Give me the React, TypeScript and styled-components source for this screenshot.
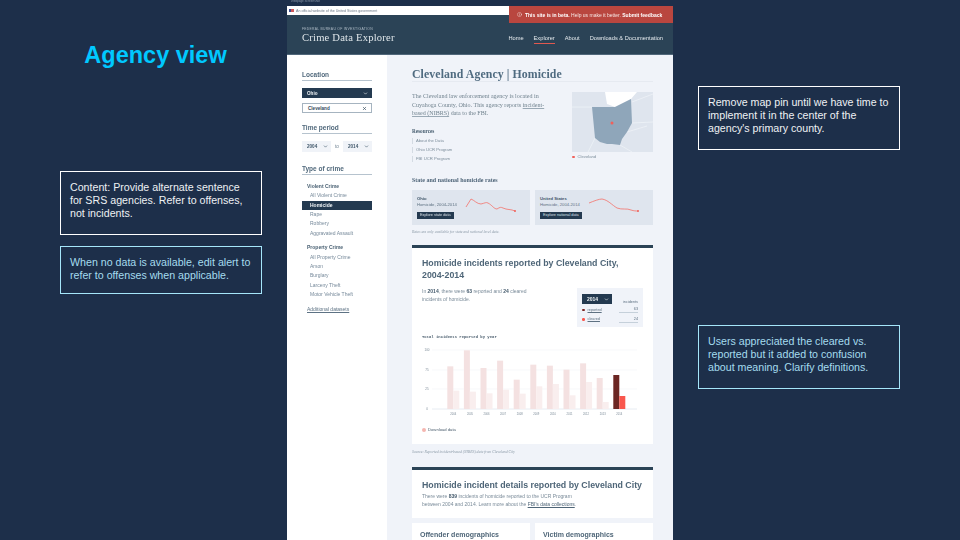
import React from 'react';
import styled, { createGlobalStyle } from 'styled-components';
import { ChevronDown, X, Info } from 'lucide-react';

const reported = [105, 57, 110, 88, 145, 100, 103, 115, 96, 140];
const cleared = [178, 181, 186, 175, 187, 165, 158, 192, 152, 212];
const years = [2004, 2005, 2006, 2007, 2008, 2009, 2010, 2011, 2012, 2013, 2014];

const GlobalStyle = createGlobalStyle`
  html, body {
    margin: 0;
    padding: 0;
    background: #1d2f4a;
  }
  * {
    box-sizing: border-box;
  }
`;

const Slide = styled.div`
  width: 960px;
  height: 540px;
  overflow: hidden;
  display: grid;
  grid-template-columns: 287px 386px 287px;
  background: #1d2f4a;
  font-family: 'Liberation Sans', Arial, sans-serif;
`;

const LeftColumn = styled.div`
  display: flex;
  flex-direction: column;
  padding: 41px 25px 0 60px;
`;

const RightColumn = styled.div`
  display: flex;
  flex-direction: column;
  padding: 86px 60px 0 25px;
`;

const SlideTitle = styled.h1`
  margin: 0 0 102px -60px;
  width: 311px;
  text-align: center;
  font-size: 23.5px;
  line-height: 28px;
  font-weight: bold;
  color: #00c8ff;
`;

const Note = styled.div<{ $tone?: 'white' | 'blue'; $height: number; $gap?: number }>`
  width: 202px;
  height: ${(p) => p.$height}px;
  margin-bottom: ${(p) => p.$gap ?? 0}px;
  padding: 9px 8px 0 9px;
  border: 1px solid ${(p) => (p.$tone === 'blue' ? '#a5e6fa' : '#ffffff')};
  color: ${(p) => (p.$tone === 'blue' ? '#a5dcef' : '#eef1f4')};
  font-size: 10.65px;
  line-height: 13px;
`;

const Panel = styled.div`
  position: relative;
  display: flex;
  flex-direction: column;
  height: 540px;
  min-width: 0;
  overflow: hidden;
  filter: blur(0.45px);
`;

const PanelCaption = styled.div`
  height: 6px;
  padding-left: 4px;
  font-size: 3px;
  line-height: 3px;
  color: #8a97a8;
`;

const GovBar = styled.div`
  display: flex;
  align-items: center;
  gap: 2px;
  height: 9px;
  padding-left: 2px;
  background: #ffffff;
  font-size: 3.6px;
  color: #6d7a88;
`;

const Flag = styled.span`
  width: 5px;
  height: 3px;
  background: linear-gradient(90deg, #3d4f8f 45%, #cf5a5a 45%);
`;

const BetaBanner = styled.div`
  position: absolute;
  top: 6px;
  right: 0;
  display: flex;
  align-items: center;
  gap: 3px;
  width: 164px;
  height: 17px;
  padding-left: 8px;
  background: #b9463f;
  color: #f6e6e4;
  font-size: 5px;
  white-space: nowrap;

  b {
    color: #ffffff;
  }
`;

const SiteHeader = styled.header`
  display: flex;
  align-items: flex-end;
  justify-content: space-between;
  height: 40px;
  padding: 0 15px 10px;
  background: #2b4356;
  border-bottom: 1px solid #50677a;
`;

const Brand = styled.div`
  display: flex;
  flex-direction: column;
  color: #dfe6ea;
`;

const BrandTop = styled.span`
  font-size: 3.4px;
  line-height: 5px;
  letter-spacing: 0.25px;
  color: #aebbc6;
`;

const BrandName = styled.span`
  font-family: 'Liberation Serif', serif;
  font-size: 10.6px;
  line-height: 12px;
  letter-spacing: 0.2px;
`;

const Nav = styled.nav`
  display: flex;
  gap: 10px;
  margin-right: -5px;
  font-size: 5.7px;
  line-height: 7px;
  color: #e4eaee;
`;

const NavLink = styled.span<{ $active?: boolean }>`
  padding-bottom: 1px;
  border-bottom: 1px solid ${(p) => (p.$active ? '#e0584f' : 'transparent')};
`;

const Body = styled.div`
  flex: 1;
  display: grid;
  grid-template-columns: 100px minmax(0, 1fr);
  min-height: 0;
`;

const Sidebar = styled.aside`
  display: flex;
  flex-direction: column;
  padding: 16px 15px 0;
  background: #ffffff;
`;

const SideHeading = styled.div`
  height: 10px;
  margin-bottom: 7px;
  border-bottom: 1px solid #b6c3ce;
  font-size: 6.5px;
  line-height: 8px;
  font-weight: bold;
  color: #51697c;
`;

const LocationSelect = styled.div`
  display: flex;
  align-items: center;
  justify-content: space-between;
  height: 10px;
  margin-bottom: 5px;
  padding: 0 4px 0 5px;
  background: #243a50;
  color: #f0f4f6;
  font-size: 4.6px;
  font-weight: bold;
`;

const AgencyInput = styled(LocationSelect)`
  margin-bottom: 11px;
  background: #ffffff;
  border: 1px solid #a6b4c0;
  color: #33495c;
`;

const PeriodRow = styled.div`
  display: flex;
  align-items: center;
  justify-content: space-between;
  margin-bottom: 13px;
  font-size: 4.6px;
  color: #6b7f8f;
`;

const YearSelect = styled.span`
  display: flex;
  align-items: center;
  justify-content: space-between;
  width: 29px;
  height: 11px;
  padding: 0 3px 0 5px;
  background: #f0f3f8;
  color: #3f5669;
  font-weight: bold;
`;

const CrimeGroup = styled.div`
  display: flex;
  flex-direction: column;
  margin-bottom: 5px;
`;

const GroupLabel = styled.div`
  height: 9.4px;
  padding-left: 5px;
  font-size: 5px;
  line-height: 9.4px;
  font-weight: bold;
  color: #4b6274;
`;

const CrimeItem = styled.div<{ $active?: boolean }>`
  height: 9.35px;
  padding-left: 8px;
  font-size: 5px;
  line-height: 9.35px;
  font-weight: ${(p) => (p.$active ? 'bold' : 'normal')};
  background: ${(p) => (p.$active ? '#243a50' : 'transparent')};
  color: ${(p) => (p.$active ? '#f1f4f6' : '#76899a')};
`;

const SideLink = styled.span`
  margin: 2px 0 0 5px;
  font-size: 5px;
  color: #5d7284;
  text-decoration: underline;
`;

const Main = styled.main`
  display: flex;
  flex-direction: column;
  min-width: 0;
  padding: 13px 20px 0 25px;
  background: #f0f3f9;
`;

const PageTitle = styled.h2`
  height: 14px;
  margin: 0 0 10px;
  border-bottom: 1px solid #e6eaf1;
  font-family: 'Liberation Serif', serif;
  font-size: 11.8px;
  line-height: 13px;
  letter-spacing: 0.1px;
  color: #4f6b80;
`;

const IntroRow = styled.div`
  display: flex;
  justify-content: space-between;
  height: 84px;
`;

const IntroText = styled.div`
  width: 134px;
`;

const Lead = styled.p`
  margin: 0 0 10px;
  font-family: 'Liberation Serif', serif;
  font-size: 6.05px;
  line-height: 8.5px;
  color: #71838f;

  u {
    text-decoration-color: #9aa9b5;
  }
`;

const ResourceTitle = styled.div`
  margin-bottom: 3px;
  font-family: 'Liberation Serif', serif;
  font-size: 5.2px;
  line-height: 7px;
  font-weight: bold;
  color: #4a6072;
`;

const ResourceLink = styled.div`
  height: 6px;
  margin-bottom: 3px;
  padding-left: 3px;
  border-left: 1px solid #d4dbe3;
  font-size: 4.2px;
  line-height: 6px;
  color: #7d8e9c;
`;

const MapBlock = styled.div`
  display: flex;
  flex-direction: column;
  width: 81px;
`;

const MapLegend = styled.div`
  display: flex;
  align-items: center;
  gap: 3px;
  margin-top: 2px;
  font-size: 4.2px;
  line-height: 6px;
  color: #7d8e9c;
`;

const Dot = styled.span<{ $color: string }>`
  width: 2.5px;
  height: 2.5px;
  border-radius: 50%;
  background: ${(p) => p.$color};
`;

const SectionTitle = styled.div`
  height: 9px;
  margin-bottom: 5px;
  font-family: 'Liberation Serif', serif;
  font-size: 6px;
  line-height: 8px;
  font-weight: bold;
  color: #4f6579;
`;

const RateCards = styled.div`
  display: grid;
  grid-template-columns: 118px 118px;
  gap: 5px;
  height: 35px;
`;

const RateCard = styled.div`
  display: flex;
  padding: 6px 0 0 5px;
  background: #dfe5ee;
`;

const RateInfo = styled.div`
  display: flex;
  flex-direction: column;
  align-items: flex-start;
  width: 44px;
  font-size: 4.2px;
  line-height: 6px;
  color: #5f7283;

  b {
    color: #3f5568;
  }
`;

const SmallButton = styled.span`
  margin-top: 4px;
  padding: 0 3px;
  height: 7px;
  background: #243a50;
  color: #d8e0e6;
  font-size: 3.8px;
  line-height: 7px;
  white-space: nowrap;
`;

const FinePrint = styled.div`
  height: 20px;
  padding-top: 4px;
  font-family: 'Liberation Serif', serif;
  font-style: italic;
  font-size: 3.8px;
  line-height: 6px;
  color: #8b9aa7;
`;

const Card = styled.section<{ $height: number }>`
  display: flex;
  flex-direction: column;
  height: ${(p) => p.$height}px;
  padding: 9px 10px 0;
  background: #ffffff;
  border-top: 3px solid #2b4356;
`;

const CardTitle = styled.h3<{ $gap: number }>`
  margin: 0 0 ${(p) => p.$gap}px;
  font-size: 8.8px;
  line-height: 12px;
  color: #4f6678;
  white-space: nowrap;
`;

const SummaryRow = styled.div`
  display: flex;
  justify-content: space-between;
  height: 47px;
`;

const SummaryText = styled.p`
  width: 112px;
  margin: 0;
  padding-top: 1px;
  font-size: 5px;
  line-height: 7.6px;
  color: #7a8b99;

  b {
    color: #455b6d;
  }
`;

const CountBox = styled.div`
  display: flex;
  flex-direction: column;
  width: 66px;
  height: 39px;
  margin-top: 1px;
  padding: 6px 5px 0;
  background: #f0f3f9;
  font-size: 3.8px;
  color: #5e7182;
`;

const CountHead = styled.div`
  display: flex;
  align-items: flex-end;
  justify-content: space-between;
  margin-bottom: 1px;
`;

const CountYear = styled.span`
  display: flex;
  align-items: center;
  justify-content: space-between;
  width: 30px;
  height: 10px;
  padding: 0 3px 0 5px;
  background: #243a50;
  color: #f0f4f6;
  font-size: 5px;
  font-weight: bold;
`;

const CountLine = styled.div`
  display: flex;
  align-items: center;
  gap: 3px;
  height: 9.5px;
`;

const CountValue = styled.span`
  width: 19px;
  margin-left: auto;
  padding: 1px 0 1px;
  border-bottom: 1px solid #c5d0da;
  text-align: right;
`;

const ChartLabel = styled.div`
  height: 12px;
  font-family: 'Liberation Mono', monospace;
  font-size: 3.9px;
  line-height: 6px;
  font-weight: bold;
  color: #4b5e6e;
`;

const ChartFrame = styled.svg`
  display: block;
  width: 221px;
  height: 74px;
`;

const DownloadRow = styled.div`
  display: flex;
  align-items: center;
  gap: 2px;
  margin-top: 7px;
  font-size: 4.2px;
  color: #4b5e6e;
`;

const DownloadDot = styled.span`
  width: 4px;
  height: 4px;
  border-radius: 50%;
  background: #f5b6b0;
`;

const SourceLine = styled(FinePrint)`
  height: 23px;
  padding-top: 5px;
`;

const DetailText = styled.p`
  margin: 0;
  font-size: 5px;
  line-height: 7.6px;
  color: #7a8b99;

  b {
    color: #455b6d;
  }
  u {
    color: #4f6577;
  }
`;

const DemoRow = styled.div`
  display: grid;
  grid-template-columns: 118px 118px;
  gap: 5px;
  margin-top: 5px;
`;

const DemoCard = styled.div`
  height: 40px;
  padding: 7px 8px;
  background: #ffffff;
  font-size: 7px;
  line-height: 9px;
  font-weight: bold;
  color: #4f6678;
`;

const Chev = () => <ChevronDown size={5} strokeWidth={3} />;

const OhioMap = () => (
  <svg width="81" height="60" viewBox="0 0 81 60">
    <rect width="81" height="60" fill="#dfe5ee" />
    <path d="M33 0 L65 0 L59 7 L43 15 L35 12 Z" fill="#ffffff" />
    <path d="M0 15 L20 15 M60 10 L81 2 M60 31 L81 30 M48 53 L60 60 M23 46 L16 60 M55 40 L75 34" stroke="#f4f6fa" strokeWidth="0.6" fill="none" />
    <path d="M20 15 L33 15 L43 15 L59 7 L60 31 L55 40 L50 47 L48 53 L40 52 L35 52 L28 50 L23 46 Z" fill="#8fa6ba" />
    <circle cx="40" cy="31" r="1.5" fill="#f0605a" />
  </svg>
);

const Spark = ({ d, end }: { d: string; end: [number, number] }) => (
  <svg width="66" height="28" viewBox="0 0 66 28">
    <path d={d} fill="none" stroke="#f4716a" strokeWidth="0.8" />
    <circle cx={end[0]} cy={end[1]} r="1" fill="#f0605a" />
  </svg>
);

const BarChart = () => (
  <ChartFrame viewBox="0 0 221 74">
    {[4, 24, 43].map((y) => (
      <line key={y} x1="10" x2="215" y1={y} y2={y} stroke="#f3f5f8" strokeWidth="0.7" />
    ))}
    <line x1="10" x2="215" y1="63" y2="63" stroke="#e1e7ef" strokeWidth="0.8" />
    {['100', '75', '25', '0'].map((t, i) => (
      <text key={t} x="5" y={[5, 25, 44, 64][i]} fontSize="3" fill="#7b8a97" textAnchor="middle">
        {t}
      </text>
    ))}
    {reported.map((top, i) => {
      const x = 25.3 + i * 16.6;
      const h1 = (233 - top) / 3;
      const h2 = (233 - cleared[i]) / 3;
      return (
        <g key={years[i]}>
          <rect x={x} y={63 - h1} width="6" height={h1} fill="#f4e1e1" />
          <rect x={x + 6} y={63 - h2} width="6" height={h2} fill="#f9eeee" />
        </g>
      );
    })}
    <rect x="191.3" y="29" width="6" height="34" fill="#6b2623" />
    <rect x="197.3" y="50" width="6" height="13" fill="#f9574e" />
    {years.map((y, i) => (
      <text key={y} x={31.3 + i * 16.6} y="69" fontSize="2.7" fill="#7b8a97" textAnchor="middle">
        {y}
      </text>
    ))}
  </ChartFrame>
);

export default function App() {
  return (
    <Slide>
      <GlobalStyle />
      <LeftColumn>
        <SlideTitle>Agency view</SlideTitle>
        <Note $height={64} $gap={11}>
          Content: Provide alternate sentence for SRS agencies. Refer to offenses, not incidents.
        </Note>
        <Note $tone="blue" $height={48}>
          When no data is available, edit alert to refer to offenses when applicable.
        </Note>
      </LeftColumn>

      <Panel>
        <PanelCaption>Webpage Screenshot</PanelCaption>
        <GovBar>
          <Flag />
          An official website of the United States government
        </GovBar>
        <SiteHeader>
          <Brand>
            <BrandTop>FEDERAL BUREAU OF INVESTIGATION</BrandTop>
            <BrandName>Crime Data Explorer</BrandName>
          </Brand>
          <Nav>
            <NavLink>Home</NavLink>
            <NavLink $active>Explorer</NavLink>
            <NavLink>About</NavLink>
            <NavLink>Downloads &amp; Documentation</NavLink>
          </Nav>
        </SiteHeader>
        <BetaBanner>
          <Info size={5} />
          <span>
            <b>This site is in beta.</b> Help us make it better. <b>Submit feedback</b>
          </span>
        </BetaBanner>
        <Body>
          <Sidebar>
            <SideHeading>Location</SideHeading>
            <LocationSelect>
              Ohio
              <Chev />
            </LocationSelect>
            <AgencyInput>
              Cleveland
              <X size={5} strokeWidth={3} />
            </AgencyInput>
            <SideHeading>Time period</SideHeading>
            <PeriodRow>
              <YearSelect>
                2004
                <Chev />
              </YearSelect>
              to
              <YearSelect>
                2014
                <Chev />
              </YearSelect>
            </PeriodRow>
            <SideHeading>Type of crime</SideHeading>
            <CrimeGroup>
              <GroupLabel>Violent Crime</GroupLabel>
              <CrimeItem>All Violent Crime</CrimeItem>
              <CrimeItem $active>Homicide</CrimeItem>
              <CrimeItem>Rape</CrimeItem>
              <CrimeItem>Robbery</CrimeItem>
              <CrimeItem>Aggravated Assault</CrimeItem>
            </CrimeGroup>
            <CrimeGroup>
              <GroupLabel>Property Crime</GroupLabel>
              <CrimeItem>All Property Crime</CrimeItem>
              <CrimeItem>Arson</CrimeItem>
              <CrimeItem>Burglary</CrimeItem>
              <CrimeItem>Larceny Theft</CrimeItem>
              <CrimeItem>Motor Vehicle Theft</CrimeItem>
            </CrimeGroup>
            <SideLink>Additional datasets</SideLink>
          </Sidebar>
          <Main>
            <PageTitle>Cleveland Agency | Homicide</PageTitle>
            <IntroRow>
              <IntroText>
                <Lead>
                  The Cleveland law enforcement agency is located in Cuyahoga County, Ohio. This
                  agency reports <u>incident-based (NIBRS)</u> data to the FBI.
                </Lead>
                <ResourceTitle>Resources</ResourceTitle>
                <ResourceLink>About the Data</ResourceLink>
                <ResourceLink>Ohio UCR Program</ResourceLink>
                <ResourceLink>FBI UCR Program</ResourceLink>
              </IntroText>
              <MapBlock>
                <OhioMap />
                <MapLegend>
                  <Dot $color="#f0605a" />
                  Cleveland
                </MapLegend>
              </MapBlock>
            </IntroRow>
            <SectionTitle>State and national homicide rates</SectionTitle>
            <RateCards>
              <RateCard>
                <RateInfo>
                  <b>Ohio</b>
                  Homicide, 2004-2014
                  <SmallButton>Explore state data</SmallButton>
                </RateInfo>
                <Spark d="M5 11 L10 3 C13 4 16 8 20 8 C24 7 25 6 27 7 C31 9 33 13 36 13 C39 11 40 11 42 12 C46 14 50 13 54 15" end={[54, 15]} />
              </RateCard>
              <RateCard>
                <RateInfo>
                  <b>United States</b>
                  Homicide, 2004-2014
                  <SmallButton>Explore national data</SmallButton>
                </RateInfo>
                <Spark d="M5 7 C10 5 15 3 18 3 C24 4 28 9 33 12 C38 14 43 12 47 14 C50 15 52 15 54 15" end={[54, 15]} />
              </RateCard>
            </RateCards>
            <FinePrint>Rates are only available for state and national level data.</FinePrint>
            <Card $height={199}>
              <CardTitle $gap={6}>
                Homicide incidents reported by Cleveland City,
                <br />
                2004-2014
              </CardTitle>
              <SummaryRow>
                <SummaryText>
                  In <b>2014</b>, there were <b>63</b> reported and <b>24</b> cleared incidents of
                  homicide.
                </SummaryText>
                <CountBox>
                  <CountHead>
                    <CountYear>
                      2014
                      <Chev />
                    </CountYear>
                    incidents
                  </CountHead>
                  <CountLine>
                    <Dot $color="#7a2623" />
                    <u>reported</u>
                    <CountValue>63</CountValue>
                  </CountLine>
                  <CountLine>
                    <Dot $color="#f9574e" />
                    <u>cleared</u>
                    <CountValue>24</CountValue>
                  </CountLine>
                </CountBox>
              </SummaryRow>
              <ChartLabel>Total incidents reported by year</ChartLabel>
              <BarChart />
              <DownloadRow>
                <DownloadDot />
                Download data
              </DownloadRow>
            </Card>
            <SourceLine>Source: Reported incident-based (NIBRS) data from Cleveland City</SourceLine>
            <Card $height={51}>
              <CardTitle $gap={2}>Homicide incident details reported by Cleveland City</CardTitle>
              <DetailText>
                There were <b>839</b> incidents of homicide reported to the UCR Program
                <br />
                between 2004 and 2014. Learn more about the <u>FBI's data collections</u>.
              </DetailText>
            </Card>
            <DemoRow>
              <DemoCard>Offender demographics</DemoCard>
              <DemoCard>Victim demographics</DemoCard>
            </DemoRow>
          </Main>
        </Body>
      </Panel>

      <RightColumn>
        <Note $height={64} $gap={175}>
          Remove map pin until we have time to implement it in the center of the agency's primary
          county.
        </Note>
        <Note $tone="blue" $height={64}>
          Users appreciated the cleared vs. reported but it added to confusion about meaning.
          Clarify definitions.
        </Note>
      </RightColumn>
    </Slide>
  );
}
